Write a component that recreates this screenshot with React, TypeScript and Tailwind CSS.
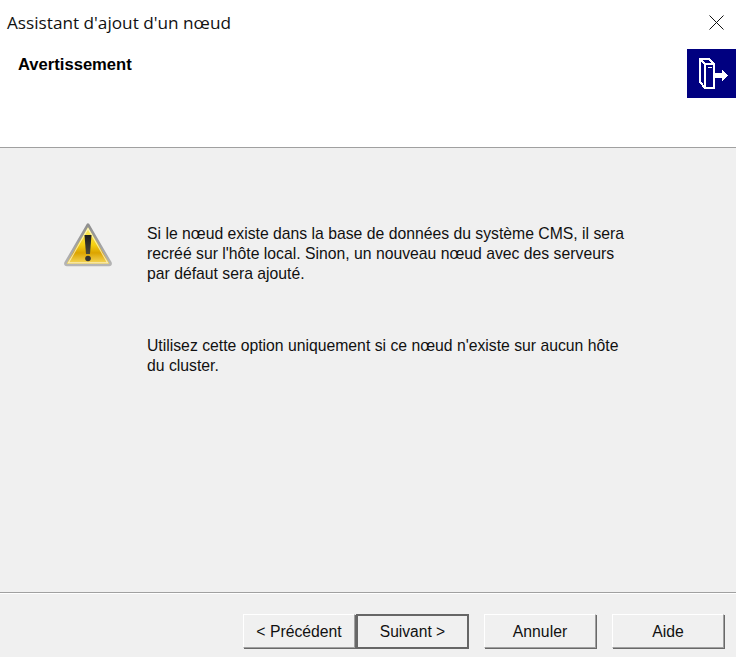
import React from 'react';

const WarningIcon = () => (
  <svg width="50" height="46" viewBox="0 0 50 46">
    <defs>
      <linearGradient id="warnFill" x1="0" y1="0" x2="0" y2="1">
        <stop offset="0" stopColor="#fdf27a" />
        <stop offset="0.5" stopColor="#f4d012" />
        <stop offset="0.7" stopColor="#dca400" />
        <stop offset="1" stopColor="#f8de66" />
      </linearGradient>
      <linearGradient id="warnEdge" x1="0" y1="0" x2="0" y2="1">
        <stop offset="0" stopColor="#8f8f8f" />
        <stop offset="1" stopColor="#b5b5b5" />
      </linearGradient>
      <linearGradient id="warnMark" x1="0" y1="0" x2="0" y2="1">
        <stop offset="0" stopColor="#1c1c1c" />
        <stop offset="1" stopColor="#4a4a3a" />
      </linearGradient>
    </defs>
    <path d="M25 2.5 L47.5 41 Q48 43 46 43 L4 43 Q2 43 2.5 41 Z" fill="url(#warnFill)" stroke="url(#warnEdge)" strokeWidth="2.6" strokeLinejoin="round" />
    <path d="M25 6.5 L44.5 40.8 L5.5 40.8 Z" fill="none" stroke="#ffffff" strokeOpacity="0.6" strokeWidth="1.1" />
    <path d="M21.5 13 L28.5 13 L27 32 L23 32 Z" fill="url(#warnMark)" />
    <circle cx="25" cy="36.5" r="2.8" fill="#333" />
  </svg>
);

const NodeIcon = () => (
  <svg width="49" height="49" viewBox="0 0 49 49" shapeRendering="crispEdges">
    <rect width="49" height="49" fill="#000080" />
    <path d="M13 10 H22 L27 15 V39 H18 L13 33 Z" fill="none" stroke="#fff" strokeWidth="2" />
    <path d="M18 39 V15 H27 M13 10 L18 15" fill="none" stroke="#fff" strokeWidth="2" />
    <rect x="21" y="18" width="4" height="1" fill="#fff" />
    <path d="M28 24 H35 V21 L41 26.5 L35 32 V29 H28 Z" fill="#fff" />
  </svg>
);

const WizardButton = ({ label, primary = false }: { label: string; primary?: boolean }) => (
  <button
    className={
      primary
        ? 'h-[35px] w-[113px] bg-[#f0f0f0] border-2 border-[#666666] text-[15.6px] text-[#111]'
        : 'h-[34px] w-[112px] pt-[1px] bg-[#f0f0f0] border border-t-white border-l-white border-r-[#a0a0a0] border-b-[#a0a0a0] shadow-[1px_1px_0_#696969] text-[15.75px] text-[#111]'
    }
  >
    {label}
  </button>
);

export default function App() {
  return (
    <div className="w-[736px] h-[657px] flex flex-col bg-[#f0f0f0] overflow-hidden font-['Liberation_Sans',Arial,sans-serif] text-black">
      <div className="relative h-[148px] shrink-0 bg-white border-b border-[#a0a0a0]">
        <div className="pl-[7px] pt-[11px] text-[17.2px] leading-[24px] text-[#111] font-['Open_Sans','Noto_Sans',sans-serif]">
          Assistant d'ajout d'un nœud
        </div>
        <div className="pl-[18px] pt-[20px] text-[16.6px] leading-[20px] font-bold">Avertissement</div>
        <svg className="absolute left-[709px] top-[15px]" width="15" height="15" viewBox="0 0 15 15">
          <path d="M0.5 0.5 L14.5 14.5 M14.5 0.5 L0.5 14.5" stroke="#111" strokeWidth="1" />
        </svg>
        <div className="absolute left-[687px] top-[49px]">
          <NodeIcon />
        </div>
      </div>

      <div className="flex-1 flex pl-[63px] pt-[74px]">
        <div className="w-[84px] shrink-0">
          <WarningIcon />
        </div>
        <div className="w-[490px] text-[15.75px] leading-[20px] text-[#111] pt-[2px]">
          <p>
            Si le nœud existe dans la base de données du système CMS, il sera recréé sur l'hôte local. Sinon, un nouveau
            nœud avec des serveurs par défaut sera ajouté.
          </p>
          <p className="mt-[52px]">
            Utilisez cette option uniquement si ce nœud n'existe sur aucun hôte du cluster.
          </p>
        </div>
      </div>

      <div className="h-[65px] shrink-0 border-t border-[#a0a0a0] shadow-[inset_0_1px_0_#fff] flex items-start pl-[243px] pt-[21px]">
        <WizardButton label="< Précédent" />
        <div className="ml-[1px]">
          <WizardButton label="Suivant >" primary />
        </div>
        <div className="ml-[15px]">
          <WizardButton label="Annuler" />
        </div>
        <div className="ml-[16px]">
          <WizardButton label="Aide" />
        </div>
      </div>
    </div>
  );
}
